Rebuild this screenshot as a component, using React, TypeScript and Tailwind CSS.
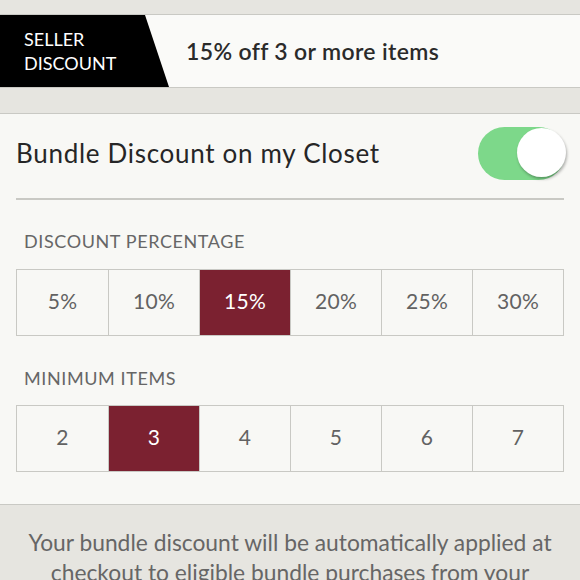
import React from 'react';

const percentages = ['5%', '10%', '15%', '20%', '25%', '30%'];
const minimums = ['2', '3', '4', '5', '6', '7'];

interface SegmentProps {
  options: string[];
  selected: string;
}

const Segmented: React.FC<SegmentProps> = ({ options, selected }) => (
  <div className="grid grid-cols-6 border border-[#c9c9c4] mx-4 h-[67px]">
    {options.map((opt, i) => (
      <div
        key={opt}
        className={`flex items-center justify-center pb-[4px] text-[21px] tracking-[0.3px] ${i > 0 ? 'border-l border-[#c9c9c4]' : ''} ${
          opt === selected ? 'bg-[#7b2130] text-white' : 'text-[#626262]'
        }`}
      >
        {opt}
      </div>
    ))}
  </div>
);

export default function App() {
  return (
    <div
      className="w-[580px] h-[580px] overflow-hidden bg-[#e6e5e0]"
      style={{ fontFamily: 'Lato, "Open Sans", sans-serif' }}
    >
      <div className="h-[14px]" />
      {/* seller discount banner */}
      <div className="relative h-[74px] bg-[#fafaf8] border-t border-b border-[#c9c9c4] flex items-center">
        <div
          className="absolute left-0 top-0 bottom-0 w-[169px] bg-black"
          style={{ clipPath: 'polygon(0 0, 145px 0, 169px 100%, 0 100%)' }}
        />
        <div className="relative w-[186px] pl-6 text-white text-[18px] leading-[24px]">
          <div>SELLER</div>
          <div>DISCOUNT</div>
        </div>
        <div className="relative text-[23px] tracking-[0.35px] text-[#2a2a2a] font-semibold">15% off 3 or more items</div>
      </div>

      <div className="h-[25px]" />

      {/* bundle settings panel */}
      <div className="bg-[#f8f8f5] border-t border-b border-[#c9c9c4] h-[392px]">
        <div className="flex items-center justify-between pl-4 pr-[15px] h-[84px] pb-[6px]">
          <span className="text-[26px] tracking-[0.7px] text-[#262626]">Bundle Discount on my Closet</span>
          <div className="relative w-[87px] h-[53px] rounded-full bg-[#7dd88a]">
            <div className="absolute right-[-1px] top-[1px] w-[49px] h-[49px] rounded-full bg-white shadow-[1px_2px_3px_rgba(0,0,0,0.3)]" />
          </div>
        </div>
        <div className="mx-4 border-t-2 border-[#c9c9c4]" />

        <div className="pl-6 pt-[29px] pb-[16px] text-[18px] text-[#666] tracking-[0.6px] leading-[24px]">DISCOUNT PERCENTAGE</div>
        <Segmented options={percentages} selected="15%" />

        <div className="pl-6 pt-[30px] pb-[15px] text-[18px] text-[#666] tracking-[0.6px] leading-[24px]">MINIMUM ITEMS</div>
        <Segmented options={minimums} selected="3" />
      </div>

      <p className="pt-[22px] px-5 text-center text-[22.8px] leading-[30px] text-[#666]">
        Your bundle discount will be automatically applied at checkout to eligible bundle purchases from your closet.
      </p>
    </div>
  );
}
